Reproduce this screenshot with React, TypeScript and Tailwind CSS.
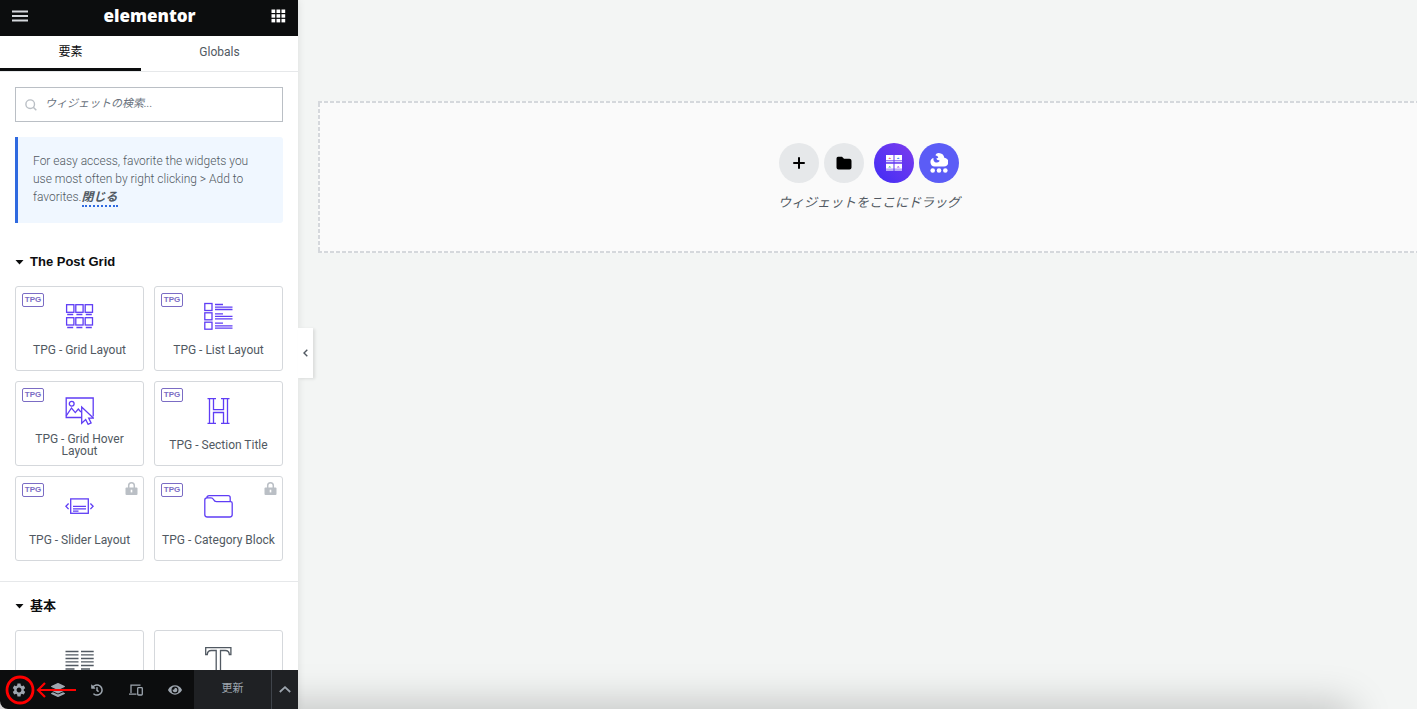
import React from "react";
import { MdSettings } from "react-icons/md";
import { FaEye, FaHistory, FaLayerGroup } from "react-icons/fa";

const latin = "font-['Roboto','Noto_Sans_CJK_JP',sans-serif]";

function Glyph({ children }: { children: React.ReactNode }) {
  return (
    <svg className="h-7 w-[29px] shrink-0" viewBox="0 0 29 28" fill="none" stroke="currentColor" strokeWidth="1.3" aria-hidden="true">
      {children}
    </svg>
  );
}

const GridGlyph = () => (
  <Glyph>
    {[1.6, 10.8, 20.2].map((x) => (
      <g key={x}>
        <rect x={x} y="2.7" width="7.3" height="7.6" />
        <rect x={x} y="15.7" width="7.3" height="7.3" />
        <path d={`M${x + 0.6} 12.500h6M${x + 0.6} 25.500h6`} />
      </g>
    ))}
  </Glyph>
);

const ListGlyph = () => (
  <Glyph>
    {[1.5, 10.8, 20.2].map((y) => (
      <g key={y}>
        <rect x="0.8" y={y} width="7.2" height="7" />
        <path d={`M11 ${y + 1}h8M11 ${y + 3.6}h17.5M11 ${y + 6}h17.5`} />
      </g>
    ))}
  </Glyph>
);

const HoverGlyph = () => (
  <Glyph>
    <path d="M16.5 20.5H1.2V1h27v18.5" />
    <circle cx="6.7" cy="6.7" r="2.4" />
    <path d="M1.2 18.8 6.5 11l3.8 4.600 3-3.600 2.600 3" />
    <path d="M16.7 10v16.300l4-3.800 2.400 4.800 3-1.400-2.400-4.800h4.700z" />
  </Glyph>
);

const HeadingGlyph = () => (
  <Glyph>
    <path d="M3.500 1.600h8.500M5.500 1.600v24.800M9.500 1.600v11h10v-11M23.500 1.600v24.800M17 1.600h8.500M3.500 26.400h8.500M9.500 26.400V15.500h10v10.900M17 26.400h8.500" />
  </Glyph>
);

const SliderGlyph = () => (
  <Glyph>
    <rect x="5.7" y="6.9" width="17.6" height="14.4" />
    <path d="M8 14.400h13M8 16.800h13M8 19.200h5.500M3.600 11.500.9 14.300l2.700 2.800M25.400 11.500l2.700 2.800-2.700 2.800" />
  </Glyph>
);

const FolderGlyph = () => (
  <Glyph>
    <path d="M.8 8V22.500q0 2.500 2.500 2.500h22.400q2.500 0 2.500-2.500V11.200q0-1.500-1.500-1.500H12.500Q10.500 9.700 9.500 7.500 8.600 5.800 7 5.800H3Q.8 5.800.8 8zM2.800 5.800Q3 3.700 5.200 3.700h19q2 0 2 2v4" />
  </Glyph>
);

const ColumnsGlyph = () => (
  <Glyph>
    <path d="M.5 5.500h13M16 5.500h12.700M.5 8.800h13M16 8.800h12.700M.5 12.500h13M16 12.500h12.700M.5 15.900h13M16 15.900h12.700M.5 19.500h13M16 19.500h12.700M.5 23h9M16 23h9" />
  </Glyph>
);

const TextGlyph = () => (
  <Glyph>
    <path d="M1.700 8.500V1.700h25.200v6.800h-1.600q-.2-4-4-4H16.500V27h-4.300V4.500H7.300q-3.800 0-4 4z" />
  </Glyph>
);

const DevicesGlyph = () => (
  <svg className="h-3 w-[14px]" viewBox="0 0 14 12" fill="none" stroke="currentColor" strokeWidth="1.300" aria-hidden="true">
    <path d="M2 9V1.200h9.500M0 10.200h7.500" />
    <rect x="8.700" y="3.600" width="4.600" height="7.400" rx="0.800" />
  </svg>
);

function Lock() {
  return (
    <svg className="absolute top-[5px] right-[5px] h-[13px] w-[13px]" viewBox="0 0 13 13" aria-hidden="true">
      <path d="M3.700 6V3.600a2.800 2.800 0 0 1 5.600 0V6" fill="none" stroke="#babfc5" strokeWidth="1.500" />
      <rect x="0.500" y="5.400" width="12" height="7.600" rx="1" fill="#babfc5" />
      <path d="M6.500 7.700v2.700" stroke="#fff" strokeWidth="1.600" />
    </svg>
  );
}

function Widget({ label, icon, locked }: { label: string; icon: React.ReactNode; locked?: boolean }) {
  return (
    <button type="button" className="relative flex h-[85px] flex-col items-center gap-2 rounded-[3px] border border-[#d5d8dc] bg-white px-1 pt-[15px] text-[#5f3df5]">
      <span className="absolute top-[6px] left-[6px] flex h-[14px] w-[22px] items-center justify-center rounded-[2px] border border-[#7b6cc4] font-['Liberation_Sans',sans-serif] text-[8px] font-bold text-[#7b6cc4]">
        TPG
      </span>
      {locked && <Lock />}
      {icon}
      <span className="flex h-6 items-center text-center text-[12px] leading-3 text-[#515962]">{label}</span>
    </button>
  );
}

function CategoryTitle({ children }: { children: string }) {
  return (
    <h2 className="flex h-[18px] items-center gap-[6px] font-['Liberation_Sans','Noto_Sans_CJK_JP',sans-serif] text-[13px] leading-[18px] font-bold text-[#0c0d0e]">
      <svg className="h-[5px] w-[9px]" viewBox="0 0 9 5" aria-hidden="true">
        <path d="M.5 0h8L4.500 4.500z" fill="currentColor" />
      </svg>
      {children}
    </h2>
  );
}

const tools = [
  { name: "Settings", icon: <MdSettings size={16} /> },
  { name: "Structure", icon: <FaLayerGroup size={14} /> },
  { name: "History", icon: <FaHistory size={12} /> },
  { name: "Responsive", icon: <DevicesGlyph /> },
  { name: "Preview", icon: <FaEye size={14} /> },
];

function Sidebar() {
  return (
    <aside className="relative z-10 flex w-[298px] shrink-0 flex-col bg-white shadow-[0_0_8px_rgba(0,0,0,0.1)]">
      <header className="flex h-9 shrink-0 items-center justify-between bg-[#0c0d0e] px-3 pb-1 text-white">
        <button type="button" aria-label="Menu" className="text-[#d5d8dc]">
          <svg className="h-3 w-4" viewBox="0 0 16 12" aria-hidden="true">
            <path d="M0 1.500h16M0 6h16M0 10.500h16" stroke="currentColor" strokeWidth="2.200" />
          </svg>
        </button>
        <h1 className="font-['Open_Sans',sans-serif] text-[17px] leading-5 font-extrabold">elementor</h1>
        <button type="button" aria-label="Widgets panel">
          <svg className="h-[14px] w-[15px]" viewBox="0 0 15 14" fill="#fff" aria-hidden="true">
            {[0.5, 5.5, 10.5].map((x) => [0.5, 5.2, 9.9].map((y) => <rect key={`${x}-${y}`} x={x} y={y} width="3.700" height="3.500" />))}
          </svg>
        </button>
      </header>
      <nav className="flex h-9 shrink-0 border-b border-[#e6e8ea] text-[12px]">
        <button type="button" className="w-[141px] border-b-[3px] border-[#0c0d0e] text-[#0c0d0e]">
          要素
        </button>
        <button type="button" className="flex-1 pb-[3px] text-[#515962]">
          Globals
        </button>
      </nav>
      <div className="min-h-0 flex-1 overflow-hidden">
        <div className="px-[15px] pt-[15px]">
          <label className="flex h-[35px] items-center gap-2 border border-[#babfc5] pl-[9px]">
            <svg className="h-3 w-3 shrink-0" viewBox="0 0 12 12" fill="none" stroke="#babfc5" strokeWidth="1.400" aria-hidden="true">
              <circle cx="5.200" cy="5.200" r="4.300" />
              <path d="m8.300 8.300 3 3" />
            </svg>
            <input aria-label="ウィジェットの検索" placeholder="ウィジェットの検索..." className="min-w-0 flex-1 bg-transparent text-[11px] italic outline-none placeholder:text-[#69727d]" />
          </label>
          <p className="mt-[15px] rounded-r-[3px] border-l-[3px] border-[#2f6ae0] bg-[#f0f7ff] px-[15px] pt-[15px] pb-[17px] text-[12px] leading-[18px] font-light text-[#515962]">
            For easy access, favorite the widgets you use most often by right clicking &gt; Add to favorites.
            <a href="#close" className="border-b-2 border-dotted border-[#2f6ae0] pb-px font-bold italic">
              閉じる
            </a>
          </p>
        </div>
        <section className="border-b border-[#e6e8ea] px-[15px] pt-[30px] pb-5">
          <CategoryTitle>The Post Grid</CategoryTitle>
          <div className="mt-[15px] grid grid-cols-2 gap-[10px]">
            <Widget label="TPG - Grid Layout" icon={<GridGlyph />} />
            <Widget label="TPG - List Layout" icon={<ListGlyph />} />
            <Widget label="TPG - Grid Hover Layout" icon={<HoverGlyph />} />
            <Widget label="TPG - Section Title" icon={<HeadingGlyph />} />
            <Widget label="TPG - Slider Layout" icon={<SliderGlyph />} locked />
            <Widget label="TPG - Category Block" icon={<FolderGlyph />} locked />
          </div>
        </section>
        <section className="px-[15px] pt-[15px]">
          <CategoryTitle>基本</CategoryTitle>
          <div className="mt-[15px] grid grid-cols-2 gap-[10px] text-[#515962]">
            <button type="button" aria-label="Columns" className="flex h-[85px] justify-center rounded-[3px] border border-[#d5d8dc] pt-[15px]">
              <ColumnsGlyph />
            </button>
            <button type="button" aria-label="Heading" className="flex h-[85px] justify-center rounded-[3px] border border-[#d5d8dc] pt-[15px]">
              <TextGlyph />
            </button>
          </div>
        </section>
      </div>
      <div className="shrink-0 bg-[#d5d5d5]">
        <footer className="relative flex h-[39px] overflow-hidden rounded-bl-lg bg-[#0c0d0e] text-[#9da5ae]">
          <div className="grid w-[194px] grid-cols-5">
            {tools.map((tool) => (
              <button key={tool.name} type="button" aria-label={tool.name} className="flex items-center justify-center">
                {tool.icon}
              </button>
            ))}
          </div>
          <button type="button" className="flex-1 bg-[#1f2124] text-[11px]">
            更新
          </button>
          <button type="button" aria-label="Save options" className="flex w-[27px] items-center justify-center border-l border-[#3f444b] bg-[#1f2124]">
            <svg className="h-[7px] w-3" viewBox="0 0 12 7" fill="none" stroke="currentColor" strokeWidth="1.800" aria-hidden="true">
              <path d="M.8 6 6 1.200 11.200 6" />
            </svg>
          </button>
          <svg className="pointer-events-none absolute top-0 left-0 h-[39px] w-20" viewBox="0 0 80 39" fill="none" stroke="#f00" aria-hidden="true">
            <circle cx="20" cy="20" r="13" strokeWidth="2.800" />
            <path d="M76 20H38M45 13l-7 7 7 7" strokeWidth="2.200" />
          </svg>
        </footer>
      </div>
      <button type="button" aria-label="Hide panel" className="absolute top-[328px] left-full flex h-[50px] w-[15px] items-center justify-center bg-white text-[#515962] shadow-[2px_1px_3px_rgba(0,0,0,0.1)]">
        <svg className="h-2 w-[5px]" viewBox="0 0 5 8" fill="none" stroke="currentColor" strokeWidth="1.400" aria-hidden="true">
          <path d="M4.300.7 1 4l3.300 3.300" />
        </svg>
      </button>
    </aside>
  );
}

const dashX = "h-[2px] bg-[repeating-linear-gradient(to_right,#d5d8dc_0_4px,transparent_4px_6px)]";

function DropArea() {
  return (
    <section className="-mr-[3px] flex h-[152px] flex-col bg-[#fafafa]">
      <div className={dashX} />
      <div className="flex flex-1 flex-col items-center bg-[repeating-linear-gradient(to_bottom,#d5d8dc_0_4px,transparent_4px_6px)] bg-[length:2px_100%] bg-no-repeat pt-10">
        <div className="flex gap-[5px]">
          <button type="button" aria-label="Add new container" className="flex h-10 w-10 items-center justify-center rounded-full bg-[#e6e8ea]">
            <svg className="h-3 w-3" viewBox="0 0 12 12" stroke="#000" strokeWidth="2" strokeLinecap="round" aria-hidden="true">
              <path d="M6 1v10M1 6h10" />
            </svg>
          </button>
          <button type="button" aria-label="Add template" className="flex h-10 w-10 items-center justify-center rounded-full bg-[#e6e8ea]">
            <svg className="h-[14px] w-4" viewBox="0 0 16 14" aria-hidden="true">
              <path d="M2 .8h4l2 2h5.500q2 0 2 2v6.700q0 2-2 2h-11q-2 0-2-2V2.500Q.5.800 2 .8z" fill="#000" />
            </svg>
          </button>
          <button type="button" aria-label="The Post Grid templates" className="ml-[5px] flex h-10 w-10 items-center justify-center rounded-full bg-linear-to-tr from-[#3f2bf5] to-[#7c3aed]">
            <svg className="h-4 w-4" viewBox="0 0 16 16" aria-hidden="true">
              <path d="M0 0h7.500v5.200H0zM8.500 0H16v5.200H8.500zM0 8.700h7.500v5H0zM8.500 8.700H16v5H8.500z" fill="#fff" />
              <path d="M0 6.500h7.500M8.500 6.500H16M0 15h7.500M8.500 15H16" stroke="#d8d0ff" strokeWidth="1.400" />
              <path d="m2.200 4 1.500-1.500L5.300 4z" fill="#f26a8d" />
              <path d="m10.700 4 1.500-1.500L13.800 4z" fill="#4c8df6" />
              <path d="m2.200 12.400 1.500-1.500 1.600 1.500z" fill="#4fc08d" />
              <path d="m10.700 12.400 1.500-1.500 1.600 1.500z" fill="#a24ee8" />
            </svg>
          </button>
          <button type="button" aria-label="Cloud templates" className="flex h-10 w-10 items-center justify-center rounded-full bg-[#5b5cf6]">
            <svg className="h-5 w-[18px]" viewBox="0 0 18 20" aria-hidden="true">
              <path d="M4.500 13.500a4.300 4.300 0 0 1-1-8.400Q3 8.200 5 9.200q2.500 1 4.300-.6V7Q7 7.600 6.300 5.600L8.300 4.800Q7.800 2.700 5.600 2.600 5.600 0 8.800 0 13.500.3 14.300 4.700a4.400 4.400 0 0 1-.5 8.800z" fill="#fff" />
              <circle cx="2.700" cy="17.500" r="2.300" fill="#fff" />
              <circle cx="9" cy="17.500" r="2.300" fill="#fff" />
              <circle cx="15.300" cy="17.500" r="2.300" fill="#fff" />
            </svg>
          </button>
        </div>
        <p className="mt-[10px] text-[13px] leading-5 text-[#515962] italic">ウィジェットをここにドラッグ</p>
      </div>
      <div className={dashX} />
    </section>
  );
}

export default function App() {
  return (
    <div lang="ja" className={`flex h-screen overflow-hidden bg-[#f3f5f4] ${latin}`}>
      <Sidebar />
      <main className="relative min-w-0 flex-1 overflow-hidden pt-[101px] pl-5">
        <DropArea />
        <div className="pointer-events-none absolute top-full right-[70px] -left-10 h-10 shadow-[0_0_40px_4px_rgba(0,0,0,0.22)]" />
      </main>
    </div>
  );
}
